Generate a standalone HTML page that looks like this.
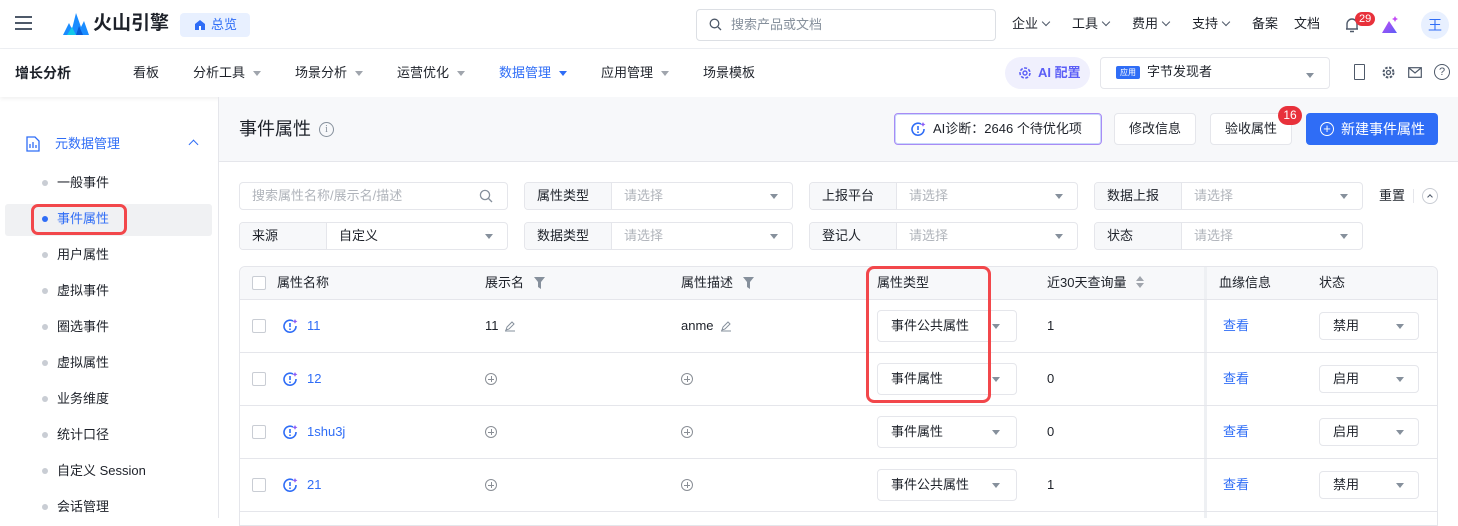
<!DOCTYPE html>
<html><head><meta charset="utf-8"><style>
*{box-sizing:border-box;margin:0;padding:0}
body{width:1458px;height:518px;overflow:hidden;background:#fff;font-family:"Liberation Sans","Noto Sans CJK SC",sans-serif;font-size:13px;line-height:16px;color:#1d2129;position:relative}
.a{position:absolute}
.tri{display:inline-block;width:0;height:0;border-left:4px solid transparent;border-right:4px solid transparent;border-top:5px solid #86909c}
.chev{display:inline-block;width:6px;height:6px;border-right:1.3px solid #4e5969;border-bottom:1.3px solid #4e5969;transform:rotate(45deg);margin-left:5px;position:relative;top:-3px}
.nav{top:65px;font-size:13px;color:#1d2129}
.nav .tri{margin-left:8px;vertical-align:middle;border-top-color:#a0a5ad}
.side{left:57px;font-size:13px;color:#1d2129}
.dot{position:absolute;left:42px;width:6px;height:6px;border-radius:50%;background:#c9cdd4}
.fb{position:absolute;height:28px;border:1px solid #e5e6eb;border-radius:4px;background:#fff;display:flex;align-items:center}
.fb .l{width:87px;height:100%;background:#f7f8fa;border-right:1px solid #e5e6eb;display:flex;align-items:center;padding-left:12px;border-radius:4px 0 0 4px}
.fb .p{color:#b0b4bb;padding-left:12px;flex:1}
.fb .tri{margin-right:14px}
.th{top:275px;font-size:13px;color:#1d2129}
.row{position:absolute;left:240px;width:1197px;height:1px;background:#e5e6eb}
.cb{position:absolute;left:252px;width:14px;height:14px;border:1px solid #c9cdd4;border-radius:2px;background:#fff}
.sel{position:absolute;left:877px;width:140px;height:32px;border:1px solid #e5e6eb;border-radius:4px;padding-left:13px;line-height:30px;font-size:13px}
.sel .tri{position:absolute;right:16px;top:13px}
.st{position:absolute;left:1319px;width:100px;height:28px;border:1px solid #e5e6eb;border-radius:4px;padding-left:13px;line-height:26px}
.st .tri{position:absolute;right:14px;top:11px}
.lk{color:#2f6df6}
.plus{position:absolute;width:12px;height:12px;border:1px solid #8a8f96;border-radius:50%}
.plus:before{content:"";position:absolute;left:2px;top:5px;width:6px;height:1px;background:#8a8f96}
.plus:after{content:"";position:absolute;left:5px;top:2px;width:1px;height:6px;background:#8a8f96}
.ic{position:absolute;left:282px}
</style></head><body>
<!-- top bar -->
<div class="a" style="left:0;top:0;width:1458px;height:49px;border-bottom:1px solid #eef0f3;background:#fff"></div>
<div class="a" style="left:15px;top:16px;width:17px;height:2px;background:#4e5969;box-shadow:0 6px 0 #4e5969,0 12px 0 #4e5969"></div>
<svg class="a" style="left:63px;top:13px" width="26" height="22" viewBox="0 0 26 22"><path d="M0 22 L6 10 L9 16 L13 0 L18 14 L21 8 L26 22Z" fill="#1a8cff"/><path d="M4 22 L9 14 L13 22Z" fill="#14c8e8"/><path d="M13 22 L16 13 L20 22Z" fill="#0a5cd6"/></svg>
<div class="a" style="left:93px;top:13px;font-size:19px;line-height:22px;font-weight:bold;color:#1d2129">火山引擎</div>
<div class="a" style="left:180px;top:13px;width:70px;height:24px;background:#e8f0ff;border-radius:4px;color:#2f6df6;font-size:13px;line-height:24px;padding-left:31px">总览</div>
<svg class="a" style="left:194px;top:19px" width="12" height="12" viewBox="0 0 12 12"><path d="M1 5 L6 1 L11 5 V11 H1Z" fill="#2f6df6"/><rect x="5" y="7" width="2" height="4" fill="#fff"/></svg>
<div class="a" style="left:696px;top:9px;width:300px;height:32px;border:1px solid #dcdfe4;border-radius:4px;color:#86909c;line-height:30px;padding-left:34px">搜索产品或文档</div>
<svg class="a" style="left:709px;top:18px" width="13" height="13" viewBox="0 0 13 13"><circle cx="5.5" cy="5.5" r="4.3" fill="none" stroke="#4e5969" stroke-width="1.3"/><path d="M9 9 L12 12" stroke="#4e5969" stroke-width="1.3"/></svg>
<div class="a" style="left:1012px;top:16px;font-size:13px">企业<span class="chev"></span></div>
<div class="a" style="left:1072px;top:16px;font-size:13px">工具<span class="chev"></span></div>
<div class="a" style="left:1132px;top:16px;font-size:13px">费用<span class="chev"></span></div>
<div class="a" style="left:1192px;top:16px;font-size:13px">支持<span class="chev"></span></div>
<div class="a" style="left:1252px;top:16px;font-size:13px">备案</div>
<div class="a" style="left:1294px;top:16px;font-size:13px">文档</div>
<svg class="a" style="left:1344px;top:16px" width="16" height="18" viewBox="0 0 16 18"><path d="M3 13 V8 a5 5 0 0 1 10 0 V13 H14 H2Z M6 15.5 h4" fill="none" stroke="#4e5969" stroke-width="1.4"/></svg>
<div class="a" style="left:1355px;top:12px;background:#e8313b;color:#fff;font-size:11px;border-radius:8px;padding:0 4px;line-height:14px">29</div>
<svg class="a" style="left:1381px;top:15px" width="18" height="19" viewBox="0 0 18 19"><defs><linearGradient id="g" x1="0" y1="0" x2="1" y2="1"><stop offset="0" stop-color="#c34cf5"/><stop offset="1" stop-color="#5b5ef6"/></linearGradient></defs><path d="M1 18 L8 6 L16 18Z" fill="url(#g)"/><path d="M14 1 l1 2 2 1 -2 1 -1 2 -1 -2 -2 -1 2 -1z" fill="#c34cf5"/></svg>
<div class="a" style="left:1421px;top:11px;width:28px;height:28px;border-radius:50%;background:#e8f0ff;color:#2f6df6;text-align:center;line-height:28px;font-size:14px">王</div>
<!-- nav bar -->
<div class="a" style="left:0;top:49px;width:1458px;height:48px;background:#fff;box-shadow:0 2px 4px rgba(0,0,0,.06)"></div>
<div class="a nav" style="left:15px;font-weight:bold;font-size:14px;top:65px">增长分析</div>
<div class="a nav" style="left:133px">看板</div>
<div class="a nav" style="left:193px">分析工具<span class="tri"></span></div>
<div class="a nav" style="left:295px">场景分析<span class="tri"></span></div>
<div class="a nav" style="left:397px">运营优化<span class="tri"></span></div>
<div class="a nav" style="left:499px;color:#2f6df6">数据管理<span class="tri" style="border-top-color:#2f6df6"></span></div>
<div class="a nav" style="left:601px">应用管理<span class="tri"></span></div>
<div class="a nav" style="left:703px">场景模板</div>
<div class="a" style="left:1005px;top:57px;width:85px;height:32px;background:#f0f0fd;border-radius:16px;color:#5b5ef6;line-height:32px;padding-left:33px;font-size:13px;font-weight:bold">AI 配置</div>
<svg class="a" style="left:1018px;top:66px" width="14" height="14" viewBox="0 0 14 14"><circle cx="7" cy="7" r="5" fill="none" stroke="#5b5ef6" stroke-width="1.6" stroke-dasharray="3 1.5"/><circle cx="7" cy="7" r="2" fill="none" stroke="#5b5ef6" stroke-width="1.4"/></svg>
<div class="a" style="left:1100px;top:57px;width:230px;height:32px;border:1px solid #e5e6eb;border-radius:4px"></div>
<div class="a" style="left:1116px;top:66px;width:24px;height:13px;background:#2f6df6;color:#fff;font-size:8px;line-height:13px;text-align:center;border-radius:2px">应用</div>
<div class="a" style="left:1147px;top:64px;font-size:13px">字节发现者</div>
<div class="a" style="left:1306px;top:66px"><span class="tri"></span></div>
<div class="a" style="left:1354px;top:64px;width:11px;height:16px;border:1.3px solid #4e5969;border-radius:1px"></div>
<svg class="a" style="left:1381px;top:65px" width="15" height="15" viewBox="0 0 15 15"><circle cx="7.5" cy="7.5" r="5" fill="none" stroke="#4e5969" stroke-width="2" stroke-dasharray="2.5 1.5"/><circle cx="7.5" cy="7.5" r="2" fill="none" stroke="#4e5969" stroke-width="1.3"/></svg>
<svg class="a" style="left:1408px;top:67px" width="14" height="11" viewBox="0 0 14 11"><rect x="0.7" y="0.7" width="12.6" height="9.6" fill="none" stroke="#4e5969" stroke-width="1.2"/><path d="M1 1 L7 6 L13 1" fill="none" stroke="#4e5969" stroke-width="1.2"/></svg>
<div class="a" style="left:1434px;top:64px;width:16px;height:16px;border:1.3px solid #4e5969;border-radius:50%;text-align:center;font-size:11px;line-height:14px;color:#4e5969">?</div>
<!-- sidebar -->
<div class="a" style="left:218px;top:97px;width:1px;height:421px;background:#e5e6eb"></div>
<svg class="a" style="left:26px;top:136px" width="14" height="16" viewBox="0 0 14 16"><path d="M1 1 H9 L13 5 V15 H1Z" fill="none" stroke="#2f6df6" stroke-width="1.3"/><path d="M4 12 V8 M7 12 V6 M10 12 V9" stroke="#2f6df6" stroke-width="1.3"/></svg>
<div class="a" style="left:55px;top:136px;color:#2f6df6">元数据管理</div>
<div class="a" style="left:190px;top:141px;width:7px;height:7px;border-left:1.4px solid #2f6df6;border-top:1.4px solid #2f6df6;transform:rotate(45deg)"></div>
<div class="a" style="left:5px;top:204px;width:207px;height:32px;background:#f0f1f3;border-radius:3px"></div>
<div class="a" style="left:31px;top:204px;width:96px;height:31px;border:3px solid #f2474b;border-radius:7px"></div>
<div class="dot" style="top:180px"></div><div class="a side" style="top:175px">一般事件</div>
<div class="dot" style="top:216px;background:#2f6df6"></div><div class="a side" style="top:211px;color:#2f6df6">事件属性</div>
<div class="dot" style="top:252px"></div><div class="a side" style="top:247px">用户属性</div>
<div class="dot" style="top:288px"></div><div class="a side" style="top:283px">虚拟事件</div>
<div class="dot" style="top:324px"></div><div class="a side" style="top:319px">圈选事件</div>
<div class="dot" style="top:360px"></div><div class="a side" style="top:355px">虚拟属性</div>
<div class="dot" style="top:396px"></div><div class="a side" style="top:391px">业务维度</div>
<div class="dot" style="top:432px"></div><div class="a side" style="top:427px">统计口径</div>
<div class="dot" style="top:468px"></div><div class="a side" style="top:463px">自定义 Session</div>
<div class="dot" style="top:504px"></div><div class="a side" style="top:499px">会话管理</div>
<!-- content header -->
<div class="a" style="left:219px;top:97px;width:1239px;height:65px;background:#f7f8fa;border-bottom:1px solid #e5e6eb"></div>
<div class="a" style="left:239px;top:118px;font-size:18px;line-height:22px">事件属性</div>
<div class="a" style="left:319px;top:122px;width:15px;height:15px;border:1px solid #86909c;border-radius:50%;color:#86909c;font-size:10px;text-align:center;line-height:13px;font-family:'Liberation Serif',serif">i</div>
<div class="a" style="left:894px;top:113px;width:208px;height:32px;border:1px solid #a88bf5;border-radius:4px;background:#fff;line-height:30px;padding-left:38px;font-size:13px;box-shadow:inset 0 0 0 1px #c8d8fb">AI诊断：2646 个待优化项</div>
<svg class="a" style="left:910px;top:121px" width="16" height="16" viewBox="0 0 16 16"><path d="M11 3 A6 6 0 1 0 14 8" fill="none" stroke="#2f6df6" stroke-width="1.6"/><path d="M8 5 V9 M8 10.5 V12" stroke="#2f6df6" stroke-width="1.6"/><path d="M13 1 l.8 1.6 1.6 .8 -1.6 .8 -.8 1.6 -.8-1.6 -1.6-.8 1.6-.8z" fill="#8b5cf6"/></svg>
<div class="a" style="left:1114px;top:113px;width:82px;height:32px;border:1px solid #e5e6eb;border-radius:4px;background:#fff;line-height:30px;text-align:center">修改信息</div>
<div class="a" style="left:1210px;top:113px;width:82px;height:32px;border:1px solid #e5e6eb;border-radius:4px;background:#fff;line-height:30px;text-align:center">验收属性</div>
<div class="a" style="left:1278px;top:106px;width:24px;height:19px;border-radius:10px;background:#e8313b;color:#fff;font-size:12px;text-align:center;line-height:19px">16</div>
<div class="a" style="left:1306px;top:113px;width:132px;height:32px;border-radius:4px;background:#2f6df6;color:#fff;line-height:32px;padding-left:35px;font-size:14px">新建事件属性</div>
<div class="a" style="left:1320px;top:122px;width:14px;height:14px;border:1.4px solid #fff;border-radius:50%;text-align:center;line-height:11px;font-size:13px;color:#fff">+</div>
<!-- filters -->
<div class="fb" style="left:239px;top:182px;width:269px"><span class="p" style="padding-left:12px">搜索属性名称/展示名/描述</span><svg width="14" height="14" viewBox="0 0 14 14" style="margin-right:14px"><circle cx="6" cy="6" r="4.6" fill="none" stroke="#86909c" stroke-width="1.3"/><path d="M9.5 9.5 L13 13" stroke="#86909c" stroke-width="1.3"/></svg></div>
<div class="fb" style="left:524px;top:182px;width:269px"><span class="l">属性类型</span><span class="p">请选择</span><span class="tri"></span></div>
<div class="fb" style="left:809px;top:182px;width:269px"><span class="l">上报平台</span><span class="p">请选择</span><span class="tri"></span></div>
<div class="fb" style="left:1094px;top:182px;width:269px"><span class="l">数据上报</span><span class="p">请选择</span><span class="tri"></span></div>
<div class="a" style="left:1379px;top:188px">重置</div>
<div class="a" style="left:1413px;top:189px;width:1px;height:14px;background:#e5e6eb"></div>
<div class="a" style="left:1422px;top:188px;width:16px;height:16px;border:1px solid #c9cdd4;border-radius:50%"></div>
<div class="a" style="left:1428px;top:195px;width:4px;height:4px;border-left:1px solid #4e5969;border-top:1px solid #4e5969;transform:rotate(45deg)"></div>
<div class="fb" style="left:239px;top:222px;width:269px"><span class="l">来源</span><span class="p" style="color:#1d2129">自定义</span><span class="tri"></span></div>
<div class="fb" style="left:524px;top:222px;width:269px"><span class="l">数据类型</span><span class="p">请选择</span><span class="tri"></span></div>
<div class="fb" style="left:809px;top:222px;width:269px"><span class="l">登记人</span><span class="p">请选择</span><span class="tri"></span></div>
<div class="fb" style="left:1094px;top:222px;width:269px"><span class="l">状态</span><span class="p">请选择</span><span class="tri"></span></div>
<!-- table -->
<div class="a" style="left:239px;top:266px;width:1199px;height:260px;border:1px solid #e5e6eb;border-radius:6px 6px 0 0"></div>
<div class="a" style="left:240px;top:267px;width:1197px;height:32px;background:#f7f8fa;border-radius:6px 6px 0 0"></div>
<div class="a" style="left:1204px;top:267px;width:3px;height:251px;background:#eef0f3"></div>
<div class="row" style="top:299px"></div><div class="row" style="top:352px"></div><div class="row" style="top:405px"></div><div class="row" style="top:458px"></div><div class="row" style="top:511px"></div>
<div class="cb" style="top:276px"></div>
<div class="a th" style="left:277px">属性名称</div>
<div class="a th" style="left:485px">展示名</div>
<svg class="a" style="left:534px;top:277px" width="11" height="12" viewBox="0 0 11 12"><path d="M0 0 H11 L7 5 V12 L4 10 V5Z" fill="#86909c"/></svg>
<div class="a th" style="left:681px">属性描述</div>
<svg class="a" style="left:743px;top:277px" width="11" height="12" viewBox="0 0 11 12"><path d="M0 0 H11 L7 5 V12 L4 10 V5Z" fill="#86909c"/></svg>
<div class="a th" style="left:877px">属性类型</div>
<div class="a th" style="left:1047px">近30天查询量</div>
<div class="a" style="left:1136px;top:276px;width:0;height:0;border-left:4px solid transparent;border-right:4px solid transparent;border-bottom:5px solid #a0a5ad"></div>
<div class="a" style="left:1136px;top:283px;line-height:5px"><span class="tri" style="border-top-color:#a0a5ad;vertical-align:top"></span></div>
<div class="a th" style="left:1219px">血缘信息</div>
<div class="a th" style="left:1319px">状态</div>
<!-- rows -->
<svg width="0" height="0" style="position:absolute"><defs><g id="ai"><path d="M11 3 A6 6 0 1 0 14 8" fill="none" stroke="#2f6df6" stroke-width="1.6"/><path d="M8 5 V9 M8 10.5 V12" stroke="#2f6df6" stroke-width="1.6"/><path d="M13 1 l.8 1.6 1.6 .8 -1.6 .8 -.8 1.6 -.8-1.6 -1.6-.8 1.6-.8z" fill="#8b5cf6"/></g></defs></svg>

<div class="cb" style="top:319px"></div><svg class="ic" style="top:318px" width="16" height="16"><use href="#ai"/></svg>
<div class="a lk" style="left:307px;top:318px">11</div>
<div class="a" style="left:485px;top:318px">11</div>
<svg class="a" style="left:504px;top:320px" width="12" height="12" viewBox="0 0 12 12"><path d="M2 10 L3 7 L8 2 L10 4 L5 9Z M1 11 H11" fill="none" stroke="#86909c" stroke-width="1"/></svg>
<div class="a" style="left:681px;top:318px">anme</div>
<svg class="a" style="left:720px;top:320px" width="12" height="12" viewBox="0 0 12 12"><path d="M2 10 L3 7 L8 2 L10 4 L5 9Z M1 11 H11" fill="none" stroke="#86909c" stroke-width="1"/></svg>
<div class="sel" style="top:310px">事件公共属性<span class="tri"></span></div>
<div class="a" style="left:1047px;top:318px">1</div>
<div class="a lk" style="left:1223px;top:318px">查看</div>
<div class="st" style="top:312px">禁用<span class="tri"></span></div>

<div class="cb" style="top:372px"></div><svg class="ic" style="top:371px" width="16" height="16"><use href="#ai"/></svg>
<div class="a lk" style="left:307px;top:371px">12</div>
<div class="plus" style="left:485px;top:373px"></div><div class="plus" style="left:681px;top:373px"></div>
<div class="sel" style="top:363px">事件属性<span class="tri"></span></div>
<div class="a" style="left:1047px;top:371px">0</div>
<div class="a lk" style="left:1223px;top:371px">查看</div>
<div class="st" style="top:365px">启用<span class="tri"></span></div>

<div class="cb" style="top:425px"></div><svg class="ic" style="top:424px" width="16" height="16"><use href="#ai"/></svg>
<div class="a lk" style="left:307px;top:424px">1shu3j</div>
<div class="plus" style="left:485px;top:426px"></div><div class="plus" style="left:681px;top:426px"></div>
<div class="sel" style="top:416px">事件属性<span class="tri"></span></div>
<div class="a" style="left:1047px;top:424px">0</div>
<div class="a lk" style="left:1223px;top:424px">查看</div>
<div class="st" style="top:418px">启用<span class="tri"></span></div>

<div class="cb" style="top:478px"></div><svg class="ic" style="top:477px" width="16" height="16"><use href="#ai"/></svg>
<div class="a lk" style="left:307px;top:477px">21</div>
<div class="plus" style="left:485px;top:479px"></div><div class="plus" style="left:681px;top:479px"></div>
<div class="sel" style="top:469px">事件公共属性<span class="tri"></span></div>
<div class="a" style="left:1047px;top:477px">1</div>
<div class="a lk" style="left:1223px;top:477px">查看</div>
<div class="st" style="top:471px">禁用<span class="tri"></span></div>

<div class="a" style="left:866px;top:266px;width:125px;height:137px;border:3px solid #f2474b;border-radius:8px"></div>
</body></html>
